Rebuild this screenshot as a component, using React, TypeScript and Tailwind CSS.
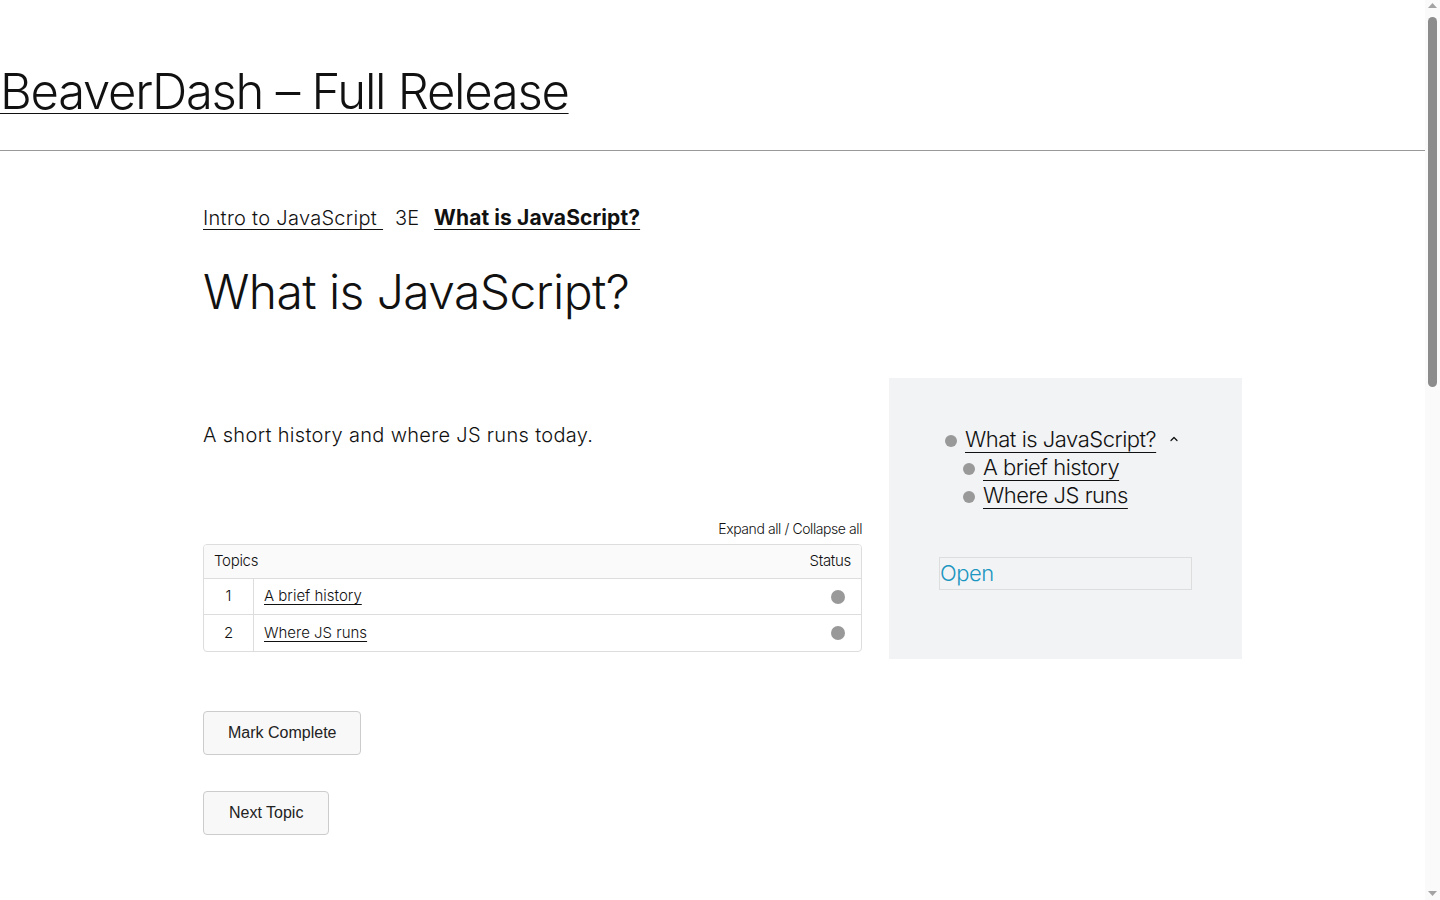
import { ChevronUp } from "lucide-react";

const font = { fontFamily: "Inter, 'Noto Sans', sans-serif" };

const topics = [
  { n: 1, title: "A brief history" },
  { n: 2, title: "Where JS runs" },
];

const Scrollbar = () => (
  <div className="sticky top-0 flex h-screen w-[15px] shrink-0 flex-col items-center self-start bg-[#fafafa]">
    <svg width="9" height="6" viewBox="0 0 9 6" className="mt-[3px]">
      <path d="M0 5 L4.5 0 L9 5 Z" fill="#a3a3a3" />
    </svg>
    <div className="mt-[8px] h-[370px] w-[9px] rounded-full bg-[#8c8c8c]" />
    <div className="flex-1" />
    <svg width="9" height="6" viewBox="0 0 9 6" className="mb-[3px]">
      <path d="M0 0 L4.5 5 L9 0 Z" fill="#a3a3a3" />
    </svg>
  </div>
);

const App = () => {
  return (
    <div className="flex bg-white text-[#111]" style={font}>
      <div className="min-h-[2100px] min-w-0 flex-1">
        <header className="pt-[62px]">
          <h1 className="text-[49px] font-light leading-[60px] tracking-[-0.026em]">
            <a href="#" className="underline decoration-1 underline-offset-[4px]">
              BeaverDash – Full Release
            </a>
          </h1>
        </header>
        <hr className="mt-[28px] border-0 border-t border-[#999]" />

        <main className="pl-[203px] pt-[52px]">
          <nav className="flex items-center text-[20px] font-light leading-[30px]">
            <a href="#" className="underline decoration-1 underline-offset-4 tracking-[0.015em]">
              Intro to JavaScript&nbsp;
            </a>
            <span className="ml-[12px]">3E</span>
            <a href="#" className="ml-[15px] text-[21px] font-bold underline decoration-1 underline-offset-4 tracking-[0.005em]">
              What is JavaScript?
            </a>
          </nav>

          <h2 className="mt-[29px] text-[48px] font-light leading-[60px] tracking-[-0.012em]">
            What is JavaScript?
          </h2>

          <div className="mt-[55px] flex gap-[27px]">
            <section className="w-[659px]">
              <p className="mt-[44px] text-[20px] font-light leading-[28px] tracking-[0.016em]">
                A short history and where JS runs today.
              </p>

              <div className="mt-[70px] text-right text-[14px] font-light leading-[20px] tracking-[-0.03em]">
                Expand all / Collapse all
              </div>

              <div className="mt-[5px] overflow-hidden rounded border border-[#ddd] text-[15px] font-light">
                <div className="flex h-[34px] items-center justify-between border-b border-[#ddd] bg-[#fafafa] px-[10px]">
                  <span className="tracking-[-0.02em]">Topics</span>
                  <span className="tracking-[-0.02em]">Status</span>
                </div>
                {topics.map((t, i) => (
                  <div
                    key={t.n}
                    className={`flex h-[36px] items-center ${i < topics.length - 1 ? "border-b border-[#ddd]" : ""}`}
                  >
                    <span className="flex h-full w-[50px] items-center justify-center border-r border-[#ddd]">
                      {t.n}
                    </span>
                    <a href="#" className="ml-[10px] flex-1 underline decoration-1 underline-offset-[3px]">
                      {t.title}
                    </a>
                    <span className="mr-[16px] h-[14px] w-[14px] rounded-full bg-[#999]" />
                  </div>
                ))}
              </div>

              <div className="mt-[59px] flex flex-col items-start gap-[36px]" style={{ fontFamily: "'Liberation Sans', Arial, sans-serif" }}>
                <button className="h-[44px] rounded border border-[#ccc] bg-[#f8f8f8] px-[24px] text-[16px] text-[#222]">
                  Mark Complete
                </button>
                <button className="h-[44px] rounded border border-[#ccc] bg-[#f8f8f8] px-[25px] text-[16px] text-[#222]">
                  Next Topic
                </button>
              </div>
            </section>

            <aside className="mt-[1px] h-[281px] w-[353px] bg-[#f2f3f5] px-[50px] pt-[47px]">
              <ul className="pl-[6px] text-[22px] font-light leading-[28px] tracking-[-0.022em]">
                <li className="flex items-center">
                  <span className="mr-[8px] mt-[4px] h-[12px] w-[12px] rounded-full bg-[#999]" />
                  <a href="#" className="underline decoration-1 underline-offset-[5px]">
                    What is JavaScript?
                  </a>
                  <ChevronUp className="ml-[12px] h-[12px] w-[12px]" strokeWidth={2.5} />
                </li>
                {topics.map((t) => (
                  <li key={t.n} className="ml-[18px] flex items-center">
                    <span className="mr-[8px] mt-[4px] h-[12px] w-[12px] rounded-full bg-[#999]" />
                    <a href="#" className="underline decoration-1 underline-offset-[5px]">
                      {t.title}
                    </a>
                  </li>
                ))}
              </ul>
              <div className="mt-[48px] flex h-[33px] w-[253px] items-center border border-[#ddd] text-[22px] font-light tracking-[-0.02em] text-[#1a96c0]">
                Open
              </div>
            </aside>
          </div>
        </main>
      </div>
      <Scrollbar />
    </div>
  );
};

export default App;
